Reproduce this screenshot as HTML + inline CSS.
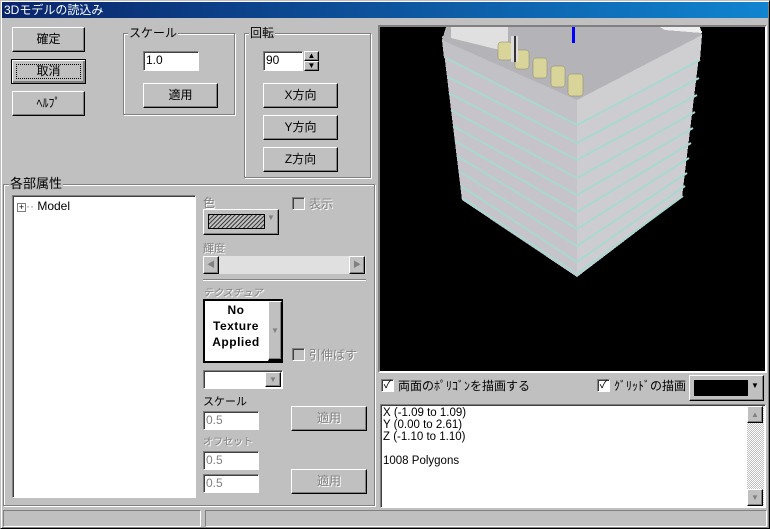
<!DOCTYPE html>
<html><head><meta charset="utf-8"><style>
*{box-sizing:border-box;margin:0;padding:0}
body{width:770px;height:529px;background:#c0c0c0;font-family:"Liberation Sans","Noto Sans CJK JP",sans-serif;font-size:12px;position:relative;overflow:hidden;color:#000}
.a{position:absolute}
.btn{position:absolute;background:#c0c0c0;border:1px solid;border-color:#fff #000 #000 #fff;box-shadow:inset -1px -1px 0 #808080;text-align:center;font-size:12px}
.in{position:absolute;background:#fff;border:1px solid;border-color:#808080 #fff #fff #808080;box-shadow:inset 1px 1px 0 #404040;padding:1px 2px;font-size:12px}
.grp{position:absolute;border:1px solid #808080;box-shadow:1px 1px 0 #fff,inset 1px 1px 0 #fff}
.gl{position:absolute;background:#c0c0c0;padding:0 1px;font-size:12px;line-height:12px}
.dis{color:#808080;text-shadow:1px 1px 0 #fff}
.cb{position:absolute;width:13px;height:13px;background:#fff;border:1px solid;border-color:#808080 #fff #fff #808080;box-shadow:inset 1px 1px 0 #404040;font-size:11px;line-height:11px;text-align:center}
.cbd{background:#c0c0c0}
.sb{position:absolute;width:16px;background:#c0c0c0;border:1px solid;border-color:#fff #000 #000 #fff;box-shadow:inset -1px -1px 0 #808080;font-size:8px;text-align:center;color:#808080}
</style></head><body>
<div class="a" style="left:0;top:0;width:770px;height:529px;border:1px solid;border-color:#c0c0c0 #000 #000 #c0c0c0;box-shadow:inset 1px 1px 0 #fff,inset -1px -1px 0 #808080"></div>
<div class="a" style="left:2px;top:2px;width:766px;height:16px;background:linear-gradient(90deg,#0a246a,#1084d0);color:#fff;font-size:12px;line-height:16px;padding-left:2px">3Dモデルの読込み</div>

<div class="btn" style="left:12px;top:27px;width:73px;height:25px;line-height:23px">確定</div>
<div class="btn" style="left:11px;top:59px;width:75px;height:25px;line-height:23px;border:1px solid #000;box-shadow:inset 1px 1px 0 #fff,inset -2px -2px 0 #808080">取消<div class="a" style="left:4px;top:4px;right:4px;bottom:4px;border:1px dotted #000"></div></div>
<div class="btn" style="left:12px;top:91px;width:73px;height:25px;line-height:23px">ﾍﾙﾌﾟ</div>

<div class="grp" style="left:123px;top:33px;width:112px;height:82px"></div>
<div class="gl" style="left:128px;top:27px">スケール</div>
<div class="in" style="left:143px;top:51px;width:56px;height:20px">1.0</div>
<div class="btn" style="left:143px;top:83px;width:75px;height:25px;line-height:23px">適用</div>

<div class="grp" style="left:244px;top:33px;width:127px;height:145px"></div>
<div class="gl" style="left:249px;top:27px">回転</div>
<div class="in" style="left:263px;top:51px;width:40px;height:20px">90</div>
<div class="sb" style="left:304px;top:51px;width:15px;height:10px;line-height:7px;color:#000">▲</div>
<div class="sb" style="left:304px;top:61px;width:15px;height:10px;line-height:7px;color:#000">▼</div>
<div class="btn" style="left:263px;top:83px;width:75px;height:25px;line-height:23px">X方向</div>
<div class="btn" style="left:263px;top:115px;width:75px;height:25px;line-height:23px">Y方向</div>
<div class="btn" style="left:263px;top:147px;width:75px;height:25px;line-height:23px">Z方向</div>

<div class="grp" style="left:3px;top:184px;width:372px;height:322px"></div>
<div class="gl" style="left:9px;top:178px;font-size:13px">各部属性</div>
<div class="in" style="left:12px;top:195px;width:184px;height:303px;padding:3px 4px"><span style="display:inline-block;width:9px;height:9px;border:1px solid #808080;font-size:9px;line-height:7px;text-align:center">+</span><span style="color:#808080">··</span> Model</div>

<div class="a dis" style="left:203px;top:194px">色</div>
<div class="btn" style="left:203px;top:209px;width:76px;height:26px"><div class="a" style="left:4px;top:4px;width:57px;height:15px;border:1px solid #000;background:repeating-linear-gradient(135deg,#404040 0 1px,#c0c0c0 1px 3px)"></div><div class="a" style="left:63px;top:3px;font-size:8px;color:#808080">▼</div></div>
<div class="cb cbd" style="left:292px;top:197px"></div>
<div class="a dis" style="left:309px;top:195px">表示</div>
<div class="a dis" style="left:203px;top:240px;font-size:11px">輝度</div>
<div class="a" style="left:203px;top:256px;width:163px;height:18px;background:#e0e0e0"></div>
<div class="sb" style="left:203px;top:256px;height:18px;line-height:16px">◀</div>
<div class="sb" style="left:349px;top:256px;height:18px;line-height:16px">▶</div>
<div class="a" style="left:203px;top:279px;width:163px;height:2px;border-top:1px solid #808080;border-bottom:1px solid #fff"></div>
<div class="a dis" style="left:203px;top:284px;font-size:10px;font-style:italic">テクスチュア</div>
<div class="a" style="left:203px;top:299px;width:80px;height:64px;background:#fff;border:2px solid #000;border-right:1px solid #000"></div>
<div class="a" style="left:205px;top:302px;width:62px;text-align:center;font-weight:bold;font-size:12px;line-height:16px;letter-spacing:.5px">No<br>Texture<br>Applied</div>
<div class="sb" style="left:268px;top:301px;height:60px;width:14px;line-height:58px;border-bottom:2px solid #000">▼</div>
<div class="cb cbd" style="left:292px;top:348px"></div>
<div class="a dis" style="left:309px;top:346px">引伸ばす</div>
<div class="in" style="left:203px;top:370px;width:80px;height:19px"></div>
<div class="sb" style="left:265px;top:372px;height:15px;line-height:13px">▼</div>
<div class="a" style="left:203px;top:393px;font-size:11px">スケール</div>
<div class="in dis" style="left:203px;top:411px;width:56px;height:19px;text-shadow:none">0.5</div>
<div class="btn dis" style="left:291px;top:406px;width:76px;height:25px;line-height:23px">適用</div>
<div class="a dis" style="left:203px;top:433px;font-size:10px">オフセット</div>
<div class="in dis" style="left:203px;top:451px;width:56px;height:19px;text-shadow:none">0.5</div>
<div class="in dis" style="left:203px;top:474px;width:56px;height:19px;text-shadow:none">0.5</div>
<div class="btn dis" style="left:291px;top:469px;width:76px;height:25px;line-height:23px">適用</div>

<svg class="a" style="left:380px;top:27px" width="385" height="344" viewBox="380 27 385 344" shape-rendering="crispEdges">
<rect x="380" y="27" width="385" height="344" fill="#000"/>
<polygon points="442,36 577,98 577,277 462,200" fill="#c6c4ca"/>
<polygon points="577,98 702,31 682,197 577,277" fill="#cdcdd1"/>
<polygon points="446,27 700,27 702,35 577,100 442,40" fill="#b4b4b8"/>
<polygon points="442,40 577,100 577,127 444,58" fill="#c2c2c6"/>
<polygon points="577,100 702,35 700,60 577,127" fill="#cfcfd2"/>
<polygon points="451,27 508,27 508,52 451,38" fill="#e0e0e0"/>
<polygon points="660,27 700,27 702,33 665,30" fill="#eee"/>
<g stroke="#a9d8d0" stroke-width="2" fill="none" shape-rendering="auto">
<polyline points="446,58 577,125 700,60"/><polyline points="448,77 577,143 699,78"/><polyline points="449,93 577,160 697,95"/><polyline points="451,110 577,178 695,112"/><polyline points="453,126 577,195 693,128"/><polyline points="455,141 577,212 691,143"/><polyline points="457,156 577,229 689,158"/><polyline points="459,171 577,246 687,173"/><polyline points="461,186 577,262 685,186"/><polyline points="462,198 577,274 683,196"/>
</g>
<g fill="#d8d49a" stroke="#8a8660" stroke-width=".5" shape-rendering="auto">
<rect x="498" y="42" width="14" height="18" rx="3"/><rect x="515" y="50" width="14" height="19" rx="3"/><rect x="533" y="58" width="14" height="20" rx="3"/><rect x="551" y="66" width="14" height="21" rx="3"/><rect x="568" y="74" width="15" height="22" rx="3"/>
</g>
<rect x="511" y="36" width="7" height="26" fill="#ddd"/><rect x="514" y="36" width="2" height="26" fill="#333"/>
<rect x="572" y="27" width="3" height="16" fill="#0000ff"/>
</svg>
<div class="a" style="left:378px;top:25px;width:389px;height:348px;border:2px solid;border-color:#808080 #fff #fff #808080"></div>

<div class="cb" style="left:381px;top:379px">✓</div>
<div class="a" style="left:398px;top:377px">両面のﾎﾟﾘｺﾞﾝを描画する</div>
<div class="cb" style="left:597px;top:379px">✓</div>
<div class="a" style="left:614px;top:377px">ｸﾞﾘｯﾄﾞの描画</div>
<div class="btn" style="left:689px;top:375px;width:75px;height:26px"><div class="a" style="left:4px;top:4px;width:54px;height:16px;background:#000"></div><div class="a" style="left:61px;top:5px;font-size:8px">▼</div></div>

<div class="in" style="left:380px;top:404px;width:386px;height:104px;line-height:12px;padding:2px 2px;font-size:11.5px">X (-1.09 to 1.09)<br>Y (0.00 to 2.61)<br>Z (-1.10 to 1.10)<br><br>1008 Polygons</div>
<div class="a" style="left:747px;top:406px;width:17px;height:100px;background:repeating-conic-gradient(#fff 0 25%,#c0c0c0 0 50%) 0 0/2px 2px"></div>
<div class="sb" style="left:747px;top:406px;height:17px;line-height:15px">▲</div>
<div class="sb" style="left:747px;top:489px;height:17px;line-height:15px">▼</div>

<div class="a" style="left:3px;top:510px;width:198px;height:17px;border:1px solid;border-color:#808080 #fff #fff #808080"></div>
<div class="a" style="left:205px;top:510px;width:562px;height:17px;border:1px solid;border-color:#808080 #fff #fff #808080"></div>
</body></html>
